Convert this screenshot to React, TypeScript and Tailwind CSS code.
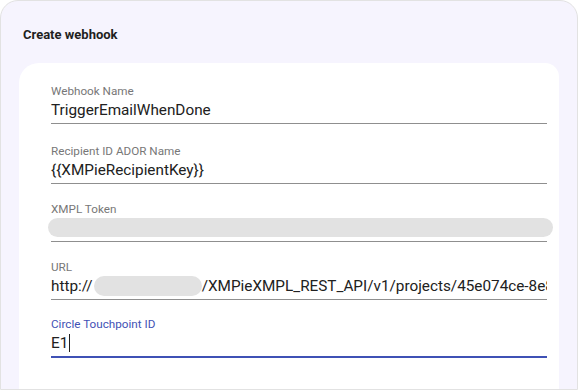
export default function App() {
  return (
    <div className="w-[579px] h-[390px] bg-white" style={{ fontFamily: "Roboto, 'Noto Sans', sans-serif" }}>
      <div className="flex h-[390px] w-[578px] flex-col overflow-hidden rounded-t-[18px] border border-[#e2e2e2] bg-[#f6f4fe]">
        <div className="pl-[22px] pt-[26px] pb-[21px] text-[13px] font-bold leading-[15px] text-[#1f1f1f]">
          Create webhook
        </div>

        <div className="ml-[18px] mr-[18px] flex-1 rounded-tl-[20px] rounded-tr-[14px] bg-white pl-[32px] pr-[12px] pt-[21px]">
          <Field label="Webhook Name" gap="mb-[20px]">
            <span>TriggerEmailWhenDone</span>
          </Field>

          <Field label="Recipient ID ADOR Name" gap="mb-[18px]">
            <span>{"{{XMPieRecipientKey}}"}</span>
          </Field>

          <Field label="XMPL Token" gap="mb-[18px]">
            <div className="-ml-[3px] -mr-[6px] h-[19px] rounded-full bg-[#e2e2e2]" />
          </Field>

          <Field label="URL" gap="mb-[17px]">
            <div className="flex items-center overflow-hidden whitespace-nowrap">
              <span>http://</span>
              <span className="ml-[1px] h-[20px] w-[108px] shrink-0 rounded-full bg-[#e2e2e2]" />
              <span>/XMPieXMPL_REST_API/v1/projects/45e074ce-8e8f</span>
            </div>
          </Field>

          <div>
            <div className="text-[11.7px] leading-[14px] text-[#3f51b5]">Circle Touchpoint ID</div>
            <div className="mt-[2px] flex h-[20px] items-center text-[15.3px] leading-[20px] text-[#212121]">
              <span>E1</span>
              <span className="ml-[1px] h-[18px] w-px bg-[#212121]" />
            </div>
            <div className="mt-[3px] h-[2px] bg-[#3f51b5]" />
          </div>
        </div>
      </div>
    </div>
  )
}

function Field({ label, gap, children }: { label: string; gap: string; children: React.ReactNode }) {
  return (
    <div className={gap}>
      <div className="text-[11.7px] leading-[14px] text-[#777777]">{label}</div>
      <div className="mt-[2px] h-[20px] text-[15.3px] leading-[20px] text-[#212121]">{children}</div>
      <div className="mt-[3px] h-px bg-[#8f8f8f]" />
    </div>
  )
}
